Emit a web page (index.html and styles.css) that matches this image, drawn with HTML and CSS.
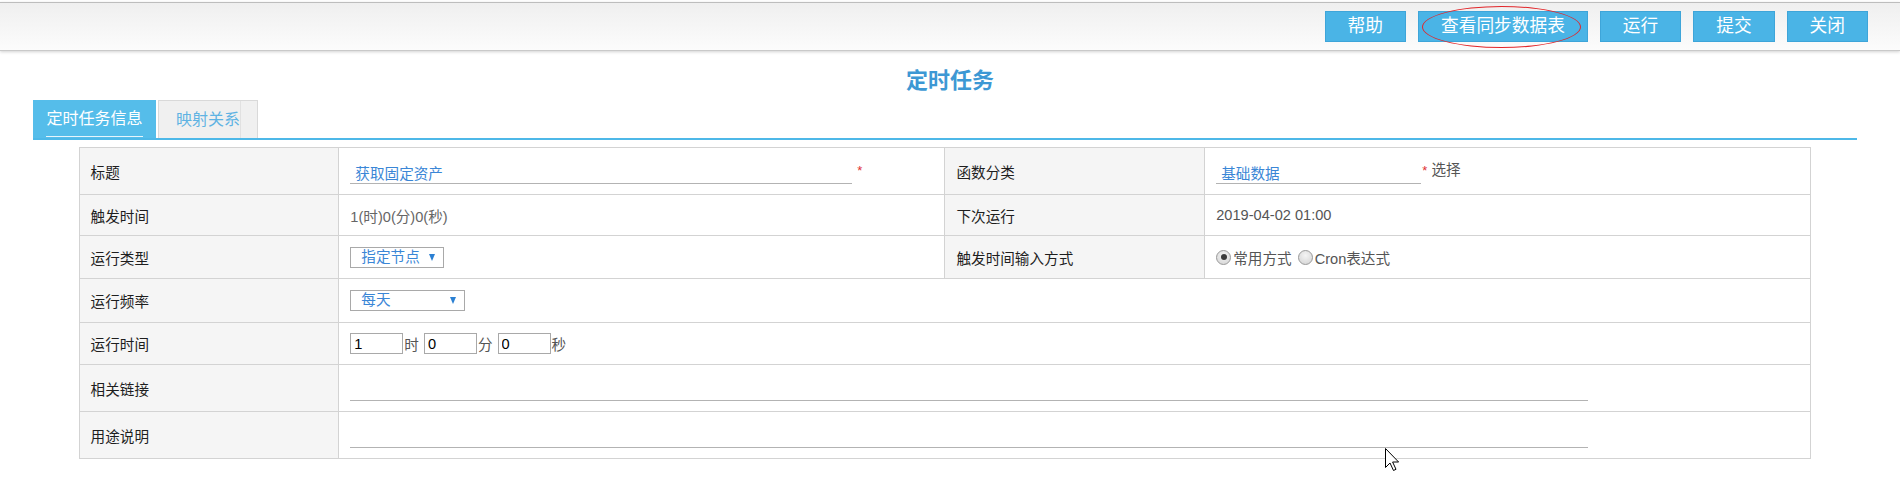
FILE: index.html
```html
<!DOCTYPE html>
<html lang="zh-CN">
<head>
<meta charset="utf-8">
<title>定时任务</title>
<link rel="stylesheet" href="styles.css">
</head>
<body>
<div class="topbar">
  <div class="btn">帮助</div>
  <div class="btn btn-marked">查看同步数据表<span class="mark"></span></div>
  <div class="btn">运行</div>
  <div class="btn">提交</div>
  <div class="btn">关闭</div>
</div>
<h1 class="title">定时任务</h1>
<div class="panel">
  <div class="tabs">
    <div class="tab tab-active"><span class="tab-text">定时任务信息</span></div>
    <div class="tab"><span class="tab-text">映射关系</span></div>
  </div>
  <table class="form">
    <colgroup>
      <col class="c-label"><col class="c-value"><col class="c-label"><col class="c-value">
    </colgroup>
    <tr class="row-tall">
      <td class="label">标题</td>
      <td><input class="line-input w-title" value="获取固定资产"><span class="req">*</span></td>
      <td class="label">函数分类</td>
      <td><input class="line-input w-cat" value="基础数据"><span class="req req-tight">*</span> <span class="muted">选择</span></td>
    </tr>
    <tr class="row-text">
      <td class="label">触发时间</td>
      <td class="plain">1(时)0(分)0(秒)</td>
      <td class="label">下次运行</td>
      <td class="date">2019-04-02 01:00</td>
    </tr>
    <tr class="row-select">
      <td class="label">运行类型</td>
      <td><span class="select w-type"><span>指定节点</span><span class="caret"></span></span></td>
      <td class="label">触发时间输入方式</td>
      <td>
        <span class="radio-opt"><span class="radio checked"></span>常用方式</span><span class="radio-opt"><span class="radio"></span>Cron表达式</span>
      </td>
    </tr>
    <tr class="row-freq">
      <td class="label">运行频率</td>
      <td colspan="3"><span class="select w-freq"><span>每天</span><span class="caret"></span></span></td>
    </tr>
    <tr class="row-time">
      <td class="label">运行时间</td>
      <td colspan="3">
        <span class="time-group"><input class="box" value="1"><span class="unit">时</span><input class="box" value="0"><span class="unit">分</span><input class="box" value="0"><span class="unit">秒</span></span>
      </td>
    </tr>
    <tr class="row-tall">
      <td class="label">相关链接</td>
      <td colspan="3"><input class="line-input w-long" value=""></td>
    </tr>
    <tr class="row-tall">
      <td class="label">用途说明</td>
      <td colspan="3"><input class="line-input w-long" value=""></td>
    </tr>
  </table>
</div>
<svg class="cursor" width="16" height="25" viewBox="0 0 16 25">
  <path d="M0.5 0.5 L0.5 19.5 L5 15 L8.5 22.5 L11 21.3 L7.6 14 L13.6 14 Z" fill="#fff" stroke="#000" stroke-width="1"/>
</svg>
</body>
</html>
```

FILE: styles.css
```css
html, body {
  margin: 0;
  padding: 0;
  background: #fff;
}
body {
  font-family: "Liberation Sans", "Noto Sans CJK SC", sans-serif;
  font-size: 14.6px;
  color: #222;
  position: relative;
  min-height: 502px;
}
.topbar {
  margin-top: 2px;
  height: 39px;
  border-top: 1px solid #bdbdbd;
  border-bottom: 1px solid #c9c9c9;
  background: linear-gradient(#efefef, #fcfcfc);
  box-shadow: 0 1px 3px rgba(0, 0, 0, 0.18);
  display: flex;
  justify-content: flex-end;
  align-items: flex-start;
  gap: 12px;
  padding: 8px 32px 0 0;
  box-sizing: content-box;
}
.btn {
  position: relative;
  height: 31px;
  box-sizing: border-box;
  line-height: 29px;
  padding: 0 22px;
  background: #4ab4e6;
  border: 1px solid #3ea5d9;
  color: #fff;
  font-size: 17.7px;
  white-space: nowrap;
}
.mark {
  position: absolute;
  left: 3px;
  top: -6px;
  width: 159px;
  height: 42px;
  box-sizing: border-box;
  border: 1.3px solid #e2262a;
  border-radius: 50%;
}
.title {
  margin: 17px 0 0;
  text-align: center;
  font-size: 22px;
  line-height: 26px;
  font-weight: bold;
  color: #3d98d4;
}
.panel {
  margin: 6px 43px 0 33px;
}
.tabs {
  display: flex;
  gap: 2px;
  border-bottom: 2px solid #4db8e8;
}
.tab {
  height: 38px;
  box-sizing: border-box;
  font-size: 16px;
}
.tab-active {
  width: 123px;
  background: #55bdea;
  color: #fff;
  padding-top: 8px;
  text-align: center;
}
.tab-active .tab-text {
  display: inline-block;
  line-height: 22px;
  padding-bottom: 6px;
  border-bottom: 1px solid rgba(255, 255, 255, 0.85);
}
.tab:not(.tab-active) {
  width: 100px;
  background: #f0f0f0;
  border: 1px solid #d9d9d9;
  border-bottom: none;
  color: #5fb3e3;
  padding: 0 16px 0 17px;
}
.tab:not(.tab-active) .tab-text {
  display: block;
  line-height: 37px;
  border-right: 1px solid #e1e1e1;
}
.form {
  width: 95%;
  margin: 7px auto 0;
  border-collapse: collapse;
  table-layout: fixed;
}
.c-label { width: 15%; }
.c-value { width: 35%; }
.form td {
  border: 1px solid #d3d3d3;
  padding: 0 0 0 11px;
  vertical-align: middle;
  white-space: nowrap;
}
.form td.label {
  background: #f5f5f5;
  color: #1e1e1e;
}
.row-tall td { height: 46px; }
.row-text td { height: 40px; }
.row-select td { height: 42px; }
.row-freq td { height: 43px; }
.row-time td { height: 41px; }
.line-input {
  box-sizing: border-box;
  height: 26px;
  border: none;
  border-bottom: 1px solid #b3b3b3;
  padding: 3px 0 0 5px;
  margin: 0;
  font-family: "Liberation Sans", "Noto Sans CJK SC", sans-serif;
  font-size: 14.6px;
  color: #3a86d6;
  background: transparent;
  outline: none;
  vertical-align: middle;
}
.w-title { width: 502px; }
.w-cat { width: 205px; }
.w-long { width: 1238px; }
.req {
  color: #e03030;
  font-size: 13px;
  margin-left: 5px;
  vertical-align: 0;
}
.req-tight { margin-left: 1px; }
.muted { color: #555; }
.plain { color: #666; }
.date { color: #555; }
.select {
  display: inline-flex;
  align-items: center;
  justify-content: space-between;
  box-sizing: border-box;
  height: 21px;
  border: 1px solid #a9a9a9;
  padding: 0 8px 0 10px;
  color: #3a86d6;
  vertical-align: middle;
  line-height: 19px;
}
.w-type { width: 94px; }
.w-freq { width: 115px; }
.caret {
  width: 0;
  height: 0;
  border-left: 3px solid transparent;
  border-right: 3px solid transparent;
  border-top: 7px solid #2b80d3;
}
.radio-opt {
  display: inline-flex;
  align-items: center;
  color: #555;
  vertical-align: middle;
}
.radio-opt + .radio-opt { margin-left: 6px; }
.radio {
  width: 13px;
  height: 13px;
  border-radius: 50%;
  border: 1px solid #9a9a9a;
  background: radial-gradient(circle at 50% 35%, #f4f4f4, #d2d2d2);
  margin-right: 2px;
  position: relative;
}
.radio.checked::after {
  content: "";
  position: absolute;
  left: 3.5px;
  top: 3.5px;
  width: 6px;
  height: 6px;
  border-radius: 50%;
  background: #3a3a3a;
}
.time-group {
  display: inline-flex;
  align-items: center;
  vertical-align: middle;
}
.box {
  box-sizing: border-box;
  width: 53px;
  height: 21px;
  border: 1px solid #a9a9a9;
  padding: 0 3px;
  margin: 0;
  font-family: "Liberation Sans", "Noto Sans CJK SC", sans-serif;
  font-size: 14.6px;
  color: #000;
  outline: none;
}
.unit {
  color: #555;
  margin: 0 5px 0 1px;
}
.cursor {
  position: absolute;
  left: 1385px;
  top: 448px;
}
```
